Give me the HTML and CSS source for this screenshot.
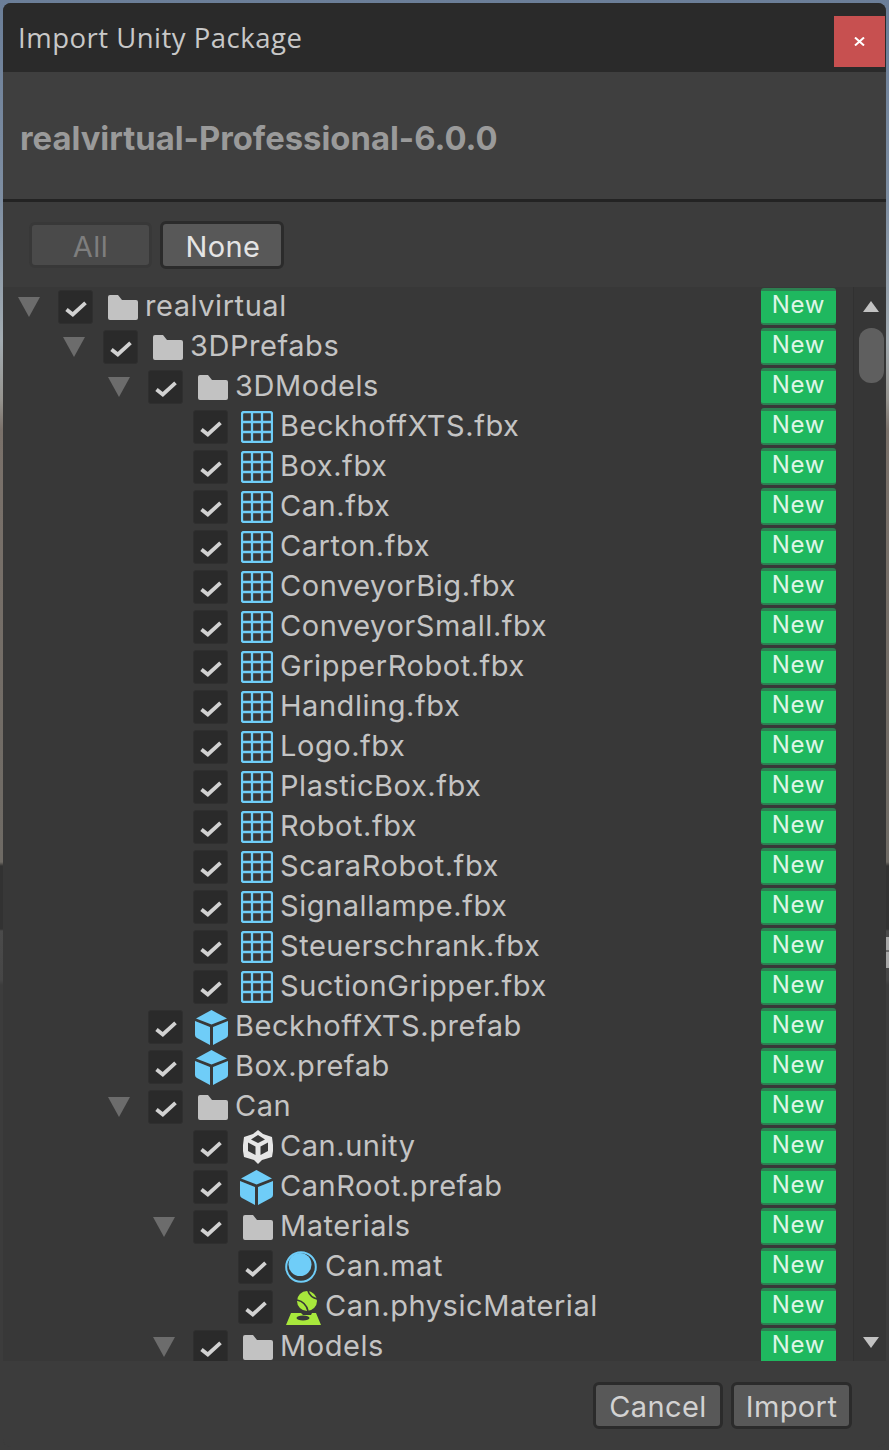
FILE: index.html
```html
<!DOCTYPE html>
<html lang="en">
<head>
<meta charset="utf-8">
<title>Import Unity Package</title>
<link rel="stylesheet" href="styles.css">
</head>
<body>
<svg class="defs" width="0" height="0" aria-hidden="true">
  <symbol id="i-arrow" viewBox="0 0 22 20"><path d="M0 0H22L11 20Z" fill="#6c6c6c"/></symbol>
  <symbol id="i-check" viewBox="0 0 22 16"><path d="M1.500 8.500L7.800 13.500L20.500 1.800" fill="none" stroke="#d2d2d2" stroke-width="3.800"/></symbol>
  <symbol id="i-folder" viewBox="0 0 30 25"><path d="M0 2Q0 0 2 0H10L14 5H28Q30 5 30 7V23Q30 25 28 25H2Q0 25 0 23Z" fill="#c2c2c2"/></symbol>
  <symbol id="i-mesh" viewBox="0 0 32 32"><path d="M1 3Q1 1 3 1H29Q31 1 31 3V29Q31 31 29 31H3Q1 31 1 29ZM11 1V31M21 1V31M1 11H31M1 21H31" fill="none" stroke="#6fcdf8" stroke-width="2.300"/></symbol>
  <symbol id="i-prefab" viewBox="0 0 33 35"><path d="M16.500 0L32 8.500L16.500 14.500L1 8.500Z" fill="#6fcdf8"/><path d="M0 11L15 17V35L2 28Q0 27 0 25Z" fill="#6fcdf8"/><path d="M33 11L18 17V35L31 28Q33 27 33 25Z" fill="#6fcdf8"/></symbol>
  <symbol id="i-unity" viewBox="0 0 32 34"><path d="M16 0L21 4L30 7L31 15V21L30 27L20 30L16 34L12 30L2 27L1 21V15L2 7L11 4Z" fill="#e6e6e6"/><path d="M16 5L23 9.500L16 13L9 9.500ZM6 12.500L13.500 16.500V25L6 21ZM26 12.500V21L18.500 25V16.500Z" fill="#383838"/></symbol>
  <symbol id="i-mat" viewBox="0 0 32 32"><circle cx="16" cy="16" r="14.800" fill="none" stroke="#6fcdf8" stroke-width="2"/><circle cx="15" cy="13.500" r="11.500" fill="#6fcdf8"/></symbol>
  <symbol id="i-physic" viewBox="0 0 35 34"><circle cx="21" cy="10" r="10" fill="#a8e83c"/><path d="M11 9Q20 11 22 20M22 0Q24 6 31 8" fill="none" stroke="#383838" stroke-width="1.600"/><path d="M5 22H15L17 24H25L26 22H30L35 34H0Z" fill="#a8e83c"/><ellipse cx="17" cy="27" rx="6.500" ry="2.500" fill="#383838"/></symbol>
</svg>

<main class="window">
  <header class="titlebar">
    <h1 class="title">Import Unity Package</h1>
    <button class="close" type="button" aria-label="Close">
      <svg class="close-x" viewBox="0 0 11 9" aria-hidden="true"><path d="M1 0.500L10 8.500M10 0.500L1 8.500" stroke="#fff" stroke-width="2" fill="none"/></svg>
    </button>
  </header>

  <section class="package"><h2 class="package-name">realvirtual-Professional-6.0.0</h2></section>

  <div class="toolbar">
    <button class="btn btn-all" type="button" disabled>All</button>
    <button class="btn btn-none" type="button">None</button>
  </div>

  <div class="tree">
    <ul class="rows">
      <li class="row l0"><span class="arrow"><svg><use href="#i-arrow"/></svg></span><span class="check"><svg><use href="#i-check"/></svg></span><svg class="icon folder"><use href="#i-folder"/></svg><span class="name">realvirtual</span><span class="badge">New</span></li>
      <li class="row l1"><span class="arrow"><svg><use href="#i-arrow"/></svg></span><span class="check"><svg><use href="#i-check"/></svg></span><svg class="icon folder"><use href="#i-folder"/></svg><span class="name">3DPrefabs</span><span class="badge">New</span></li>
      <li class="row l2"><span class="arrow"><svg><use href="#i-arrow"/></svg></span><span class="check"><svg><use href="#i-check"/></svg></span><svg class="icon folder"><use href="#i-folder"/></svg><span class="name">3DModels</span><span class="badge">New</span></li>
      <li class="row l3"><span class="arrow"></span><span class="check"><svg><use href="#i-check"/></svg></span><svg class="icon mesh"><use href="#i-mesh"/></svg><span class="name">BeckhoffXTS.fbx</span><span class="badge">New</span></li>
      <li class="row l3"><span class="arrow"></span><span class="check"><svg><use href="#i-check"/></svg></span><svg class="icon mesh"><use href="#i-mesh"/></svg><span class="name">Box.fbx</span><span class="badge">New</span></li>
      <li class="row l3"><span class="arrow"></span><span class="check"><svg><use href="#i-check"/></svg></span><svg class="icon mesh"><use href="#i-mesh"/></svg><span class="name">Can.fbx</span><span class="badge">New</span></li>
      <li class="row l3"><span class="arrow"></span><span class="check"><svg><use href="#i-check"/></svg></span><svg class="icon mesh"><use href="#i-mesh"/></svg><span class="name">Carton.fbx</span><span class="badge">New</span></li>
      <li class="row l3"><span class="arrow"></span><span class="check"><svg><use href="#i-check"/></svg></span><svg class="icon mesh"><use href="#i-mesh"/></svg><span class="name">ConveyorBig.fbx</span><span class="badge">New</span></li>
      <li class="row l3"><span class="arrow"></span><span class="check"><svg><use href="#i-check"/></svg></span><svg class="icon mesh"><use href="#i-mesh"/></svg><span class="name">ConveyorSmall.fbx</span><span class="badge">New</span></li>
      <li class="row l3"><span class="arrow"></span><span class="check"><svg><use href="#i-check"/></svg></span><svg class="icon mesh"><use href="#i-mesh"/></svg><span class="name">GripperRobot.fbx</span><span class="badge">New</span></li>
      <li class="row l3"><span class="arrow"></span><span class="check"><svg><use href="#i-check"/></svg></span><svg class="icon mesh"><use href="#i-mesh"/></svg><span class="name">Handling.fbx</span><span class="badge">New</span></li>
      <li class="row l3"><span class="arrow"></span><span class="check"><svg><use href="#i-check"/></svg></span><svg class="icon mesh"><use href="#i-mesh"/></svg><span class="name">Logo.fbx</span><span class="badge">New</span></li>
      <li class="row l3"><span class="arrow"></span><span class="check"><svg><use href="#i-check"/></svg></span><svg class="icon mesh"><use href="#i-mesh"/></svg><span class="name">PlasticBox.fbx</span><span class="badge">New</span></li>
      <li class="row l3"><span class="arrow"></span><span class="check"><svg><use href="#i-check"/></svg></span><svg class="icon mesh"><use href="#i-mesh"/></svg><span class="name">Robot.fbx</span><span class="badge">New</span></li>
      <li class="row l3"><span class="arrow"></span><span class="check"><svg><use href="#i-check"/></svg></span><svg class="icon mesh"><use href="#i-mesh"/></svg><span class="name">ScaraRobot.fbx</span><span class="badge">New</span></li>
      <li class="row l3"><span class="arrow"></span><span class="check"><svg><use href="#i-check"/></svg></span><svg class="icon mesh"><use href="#i-mesh"/></svg><span class="name">Signallampe.fbx</span><span class="badge">New</span></li>
      <li class="row l3"><span class="arrow"></span><span class="check"><svg><use href="#i-check"/></svg></span><svg class="icon mesh"><use href="#i-mesh"/></svg><span class="name">Steuerschrank.fbx</span><span class="badge">New</span></li>
      <li class="row l3"><span class="arrow"></span><span class="check"><svg><use href="#i-check"/></svg></span><svg class="icon mesh"><use href="#i-mesh"/></svg><span class="name">SuctionGripper.fbx</span><span class="badge">New</span></li>
      <li class="row l2"><span class="arrow"></span><span class="check"><svg><use href="#i-check"/></svg></span><svg class="icon prefab"><use href="#i-prefab"/></svg><span class="name">BeckhoffXTS.prefab</span><span class="badge">New</span></li>
      <li class="row l2"><span class="arrow"></span><span class="check"><svg><use href="#i-check"/></svg></span><svg class="icon prefab"><use href="#i-prefab"/></svg><span class="name">Box.prefab</span><span class="badge">New</span></li>
      <li class="row l2"><span class="arrow"><svg><use href="#i-arrow"/></svg></span><span class="check"><svg><use href="#i-check"/></svg></span><svg class="icon folder"><use href="#i-folder"/></svg><span class="name">Can</span><span class="badge">New</span></li>
      <li class="row l3"><span class="arrow"></span><span class="check"><svg><use href="#i-check"/></svg></span><svg class="icon unity"><use href="#i-unity"/></svg><span class="name">Can.unity</span><span class="badge">New</span></li>
      <li class="row l3"><span class="arrow"></span><span class="check"><svg><use href="#i-check"/></svg></span><svg class="icon prefab"><use href="#i-prefab"/></svg><span class="name">CanRoot.prefab</span><span class="badge">New</span></li>
      <li class="row l3"><span class="arrow"><svg><use href="#i-arrow"/></svg></span><span class="check"><svg><use href="#i-check"/></svg></span><svg class="icon folder"><use href="#i-folder"/></svg><span class="name">Materials</span><span class="badge">New</span></li>
      <li class="row l4"><span class="arrow"></span><span class="check"><svg><use href="#i-check"/></svg></span><svg class="icon mat"><use href="#i-mat"/></svg><span class="name">Can.mat</span><span class="badge">New</span></li>
      <li class="row l4"><span class="arrow"></span><span class="check"><svg><use href="#i-check"/></svg></span><svg class="icon physic"><use href="#i-physic"/></svg><span class="name">Can.physicMaterial</span><span class="badge">New</span></li>
      <li class="row l3"><span class="arrow"><svg><use href="#i-arrow"/></svg></span><span class="check"><svg><use href="#i-check"/></svg></span><svg class="icon folder"><use href="#i-folder"/></svg><span class="name">Models</span><span class="badge">New</span></li>
    </ul>
    <div class="scrollbar">
      <span class="tri tri-up"></span>
      <span class="thumb"></span>
      <span class="tri tri-down"></span>
    </div>
  </div>

  <footer class="footer">
    <button class="btn btn-cancel" type="button">Cancel</button>
    <button class="btn btn-import" type="button">Import</button>
  </footer>
</main>
</body>
</html>
```
FILE: styles.css
```css
* { box-sizing: border-box; }
html, body { margin: 0; padding: 0; }
body {
  position: relative;
  width: 889px;
  height: 1450px;
  overflow: hidden;
  padding: 3px;
  background: linear-gradient(180deg, #6b7e98 0, #7e8ea2 200px, #a3acb2 340px, #96948f 400px, #7a716a 430px, #6e6a64 862px, #323232 866px, #323232 929px, #4a4a4a 931px, #464646 980px, #3c3c3c 985px, #3c3c3c 1450px);
  font-family: Inter, "Liberation Sans", sans-serif;
}
body::after {
  content: "";
  position: absolute;
  right: 0;
  top: 937px;
  width: 3px;
  height: 31px;
  background: linear-gradient(180deg, #a8a8a8 0 13px, #6a6a6a 13px 15px, #a8a8a8 15px);
}
.defs { position: absolute; }
.window {
  height: 1444px;
  display: flex;
  flex-direction: column;
  overflow: hidden;
  border-radius: 8px;
  background: #3c3c3c;
}
.titlebar {
  height: 69px;
  flex: none;
  display: flex;
  align-items: flex-start;
  justify-content: space-between;
  background: #2a2a2a;
  padding: 13px 1px 0 15px;
}
.title {
  margin: 0;
  font-family: "Open Sans", "Noto Sans", sans-serif;
  font-weight: 400;
  font-size: 27.500px;
  letter-spacing: 0.5px;
  line-height: 44px;
  color: #c8c8c8;
}
.close {
  width: 51px;
  height: 51px;
  border: 0;
  padding: 0;
  background: #c75050;
  display: flex;
  align-items: center;
  justify-content: center;
}
.close-x { width: 11px; height: 9px; }
.package {
  height: 127px;
  flex: none;
  background: #3f3f3f;
  display: flex;
  align-items: center;
  padding: 4px 0 0 17px;
}
.package-name {
  margin: 0;
  font-size: 32.800px;
  font-weight: 700;
  color: #9a9a9a;
}
.toolbar {
  height: 88px;
  flex: none;
  border-top: 3px solid #232323;
  display: flex;
  gap: 8px;
  padding: 20px 0 0 26px;
  background: #3c3c3c;
}
.btn {
  font-family: Inter, "Liberation Sans", sans-serif;
  font-size: 29px;
  letter-spacing: 0.4px;
  padding: 2px 0 0;
  border-radius: 6px;
  color: #d2d2d2;
  background: #585858;
  border: 3px solid #2b2b2b;
}
.btn-all { width: 123px; height: 46px; color: #7e7e7e; background: #4a4a4a; border-color: #383838; }
.btn-none { width: 124px; height: 48px; margin-top: -1px; padding-left: 2px; color: #e4e4e4; }
.btn-cancel { width: 130px; height: 47px; }
.btn-import { width: 121px; height: 47px; }
.tree {
  flex: 1;
  min-height: 0;
  display: flex;
  background: #383838;
  overflow: hidden;
}
.rows {
  list-style: none;
  margin: 0;
  padding: 0;
  width: 850px;
  flex: none;
  overflow: hidden;
}
.row {
  height: 40px;
  display: flex;
  align-items: center;
  padding-right: 17px;
  color: #c4c4c4;
  font-size: 29px;
  letter-spacing: 0.55px;
}
.l0 { padding-left: 15px; }
.l1 { padding-left: 60px; }
.l2 { padding-left: 105px; }
.l3 { padding-left: 150px; }
.l4 { padding-left: 195px; }
.arrow { width: 40px; flex: none; display: flex; }
.arrow svg { width: 22px; height: 20px; }
.check {
  width: 35px;
  height: 34px;
  flex: none;
  display: flex;
  align-items: center;
  justify-content: center;
  background: #2a2a2a;
  border: 1px solid #2f2f2f;
  border-radius: 3px;
}
.check svg { width: 22px; height: 16px; margin-top: 4px; filter: blur(0.4px); }
.icon { flex: none; margin-left: 15px; margin-right: 7px; }
.folder { width: 30px; height: 25px; }
.mesh { width: 32px; height: 32px; margin-left: 13px; margin-right: 7px; }
.prefab { width: 33px; height: 35px; margin-left: 12px; margin-right: 7px; }
.unity { width: 32px; height: 34px; margin-left: 14px; margin-right: 6px; }
.mat { width: 32px; height: 32px; margin-left: 12px; margin-right: 8px; }
.physic { width: 35px; height: 34px; margin-left: 13px; margin-right: 4px; margin-top: 2px; }
.name { flex: 1; white-space: nowrap; padding-bottom: 4px; }
.badge {
  width: 75px;
  height: 37px;
  flex: none;
  margin-top: -2px;
  text-align: center;
  font-size: 24px;
  letter-spacing: 0.7px;
  line-height: 28px;
  color: #dff5e7;
  background: #1fb85f;
  border-top: 3px solid #2d8051;
  border-bottom: 2px solid #2d8051;
  border-radius: 3px;
}
.scrollbar {
  width: 33px;
  flex: none;
  position: relative;
  background: #363636;
  border-left: 1px solid #313131;
}
.tri { position: absolute; left: 9px; width: 0; height: 0; border-left: 8px solid transparent; border-right: 8px solid transparent; }
.tri-up { top: 14px; border-bottom: 11px solid #c2c2c2; }
.tri-down { bottom: 13px; border-top: 11px solid #c2c2c2; }
.thumb {
  position: absolute;
  left: 5px;
  top: 41px;
  width: 25px;
  height: 55px;
  border-radius: 12px;
  background: #5f5f5f;
}
.footer {
  height: 86px;
  flex: none;
  display: flex;
  gap: 8px;
  justify-content: flex-end;
  padding: 21px 34px 0 0;
  background: #3c3c3c;
}
```
